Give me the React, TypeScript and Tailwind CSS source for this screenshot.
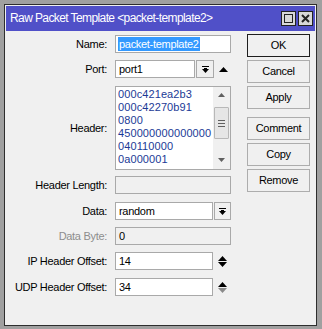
import React from 'react';

const font = { fontFamily: '"Liberation Sans", Arial, sans-serif' };

function DropIcon() {
  return (
    <svg width="7" height="7" viewBox="0 0 7 7">
      <rect x="0" y="0" width="7" height="1" fill="#000" />
      <polygon points="2,2 5,2 5,3 7,3 3.5,7 0,3 2,3" fill="#000" />
    </svg>
  );
}

function Spinner({ downDisabled = false }: { downDisabled?: boolean }) {
  return (
    <div className="flex flex-col items-center gap-[1px] ml-[4px] w-[10px]">
      <svg width="9" height="5" viewBox="0 0 9 5">
        <polygon points="0,5 4.5,0 9,5" fill="#000" />
      </svg>
      <svg width="9" height="5" viewBox="0 0 9 5">
        <polygon points="0,0 9,0 4.5,5" fill={downDisabled ? '#8a8a8a' : '#000'} />
      </svg>
    </div>
  );
}

function Row({
  label,
  disabled = false,
  className = '',
  children,
}: {
  label: string;
  disabled?: boolean;
  className?: string;
  children: React.ReactNode;
}) {
  return (
    <div className={`flex items-center ${className}`}>
      <div
        className={`w-[102px] text-right pr-[1px] ${disabled ? 'text-[#8d8d8d]' : 'text-black'}`}
      >
        {label}
      </div>
      <div className="ml-[7px] flex items-center">{children}</div>
    </div>
  );
}

function Field({ w, value, disabled = false }: { w: number; value?: string; disabled?: boolean }) {
  return (
    <div
      className={`h-[18px] border border-[#a9a9a9] flex items-center pl-[3px] ${disabled ? 'bg-[#f0f0f0]' : 'bg-white'}`}
      style={{ width: w }}
    >
      {value}
    </div>
  );
}

function Btn({ label, primary = false }: { label: string; primary?: boolean }) {
  return (
    <div
      className={`w-[63px] h-[23px] flex items-center justify-center bg-[#f0f0f0] border ${primary ? 'border-[#1e1e1e]' : 'border-[#adadad]'}`}
    >
      {label}
    </div>
  );
}

const headerLines = [
  '000c421ea2b3',
  '000c42270b91',
  '0800',
  '450000000000000',
  '040110000',
  '0a000001',
];

export default function App() {
  return (
    <div
      className="w-[322px] h-[329px] bg-[#a0a0a0] pt-[4px] pl-[4px] text-[11px] tracking-[-0.3px] leading-[13px]"
      style={font}
    >
      <div className="w-[313px] h-[322px] border border-[#2e2e2e] bg-[#f0f0f0] p-px flex flex-col">
        {/* title bar */}
        <div className="h-[25px] bg-[#5050c8] flex items-center pl-[4px] pr-[2px]">
          <span className="text-white text-[12px] tracking-[-0.6px] flex-1">
            Raw Packet Template &lt;packet-template2&gt;
          </span>
          <div className="flex gap-[2px]">
            <div className="w-[15px] h-[15px] border border-[#222] bg-[#d8d8d8] flex items-center justify-center">
              <div className="w-[9px] h-[9px] border-[1.5px] border-[#222]" />
            </div>
            <div className="w-[15px] h-[15px] border border-[#222] bg-[#d8d8d8] flex items-center justify-center">
              <svg width="9" height="9" viewBox="0 0 9 9">
                <path d="M1 1 L8 8 M8 1 L1 8" stroke="#222" strokeWidth="2" />
              </svg>
            </div>
          </div>
        </div>

        {/* body */}
        <div className="flex flex-1">
          <div className="flex flex-col w-[240px]">
            <Row label="Name:" className="mt-[4px]">
              <div className="w-[116px] h-[18px] border border-[#a9a9a9] bg-white flex items-center pl-[2px]">
                <span className="bg-[#3399ff] text-white px-[1px] leading-[14px]">packet-template2</span>
              </div>
            </Row>
            <Row label="Port:" className="mt-[7px]">
              <Field w={80} value="port1" />
              <div className="ml-[1px] w-[18px] h-[18px] border border-[#a9a9a9] bg-[#f0f0f0] flex items-center justify-center">
                <DropIcon />
              </div>
              <svg width="9" height="5" viewBox="0 0 9 5" className="ml-[5px]">
                <polygon points="0,5 4.5,0 9,5" fill="#000" />
              </svg>
            </Row>
            <Row label="Header:" className="mt-[8px]">
              <div className="w-[116px] h-[84px] border border-[#a9a9a9] bg-white flex">
                <div className="flex-1 pl-[2px] pt-[1px] text-[#1b3a96] leading-[13px] tracking-[0.1px] text-[11px] overflow-hidden whitespace-nowrap">
                  {headerLines.map((l) => (
                    <div key={l}>{l}</div>
                  ))}
                </div>
                <div className="w-[17px] shrink-0 flex flex-col items-center bg-[#f0f0f0]">
                  <svg width="7" height="4" viewBox="0 0 7 4" className="mt-[6px]">
                    <polygon points="0,4 3.5,0 7,4" fill="#606060" />
                  </svg>
                  <div className="mt-[10px] w-[15px] h-[32px] border border-[#b8b8b8] bg-[#e6e6e6] rounded-[1px] flex flex-col items-center justify-center gap-[2px]">
                    <div className="w-[7px] h-px bg-[#606060]" />
                    <div className="w-[7px] h-px bg-[#606060]" />
                    <div className="w-[7px] h-px bg-[#606060]" />
                  </div>
                  <svg width="7" height="4" viewBox="0 0 7 4" className="mt-[19px]">
                    <polygon points="0,0 7,0 3.5,4" fill="#606060" />
                  </svg>
                </div>
              </div>
            </Row>
            <Row label="Header Length:" className="mt-[6px]">
              <Field w={116} disabled />
            </Row>
            <Row label="Data:" className="mt-[8px]">
              <Field w={98} value="random" />
              <div className="ml-[1px] w-[17px] h-[18px] border border-[#a9a9a9] bg-[#f0f0f0] flex items-center justify-center">
                <DropIcon />
              </div>
            </Row>
            <Row label="Data Byte:" disabled className="mt-[7px]">
              <Field w={116} value="0" disabled />
            </Row>
            <Row label="IP Header Offset:" className="mt-[7px]">
              <Field w={98} value="14" />
              <Spinner />
            </Row>
            <Row label="UDP Header Offset:" className="mt-[8px]">
              <Field w={98} value="34" />
              <Spinner downDisabled />
            </Row>
          </div>

          <div className="flex flex-col ml-[1px] mt-[3px]">
            <div className="flex flex-col gap-[3px]">
              <Btn label="OK" primary />
              <Btn label="Cancel" />
              <Btn label="Apply" />
            </div>
            <div className="flex flex-col gap-[3px] mt-[8px]">
              <Btn label="Comment" />
              <Btn label="Copy" />
              <Btn label="Remove" />
            </div>
          </div>
        </div>
      </div>
    </div>
  );
}
